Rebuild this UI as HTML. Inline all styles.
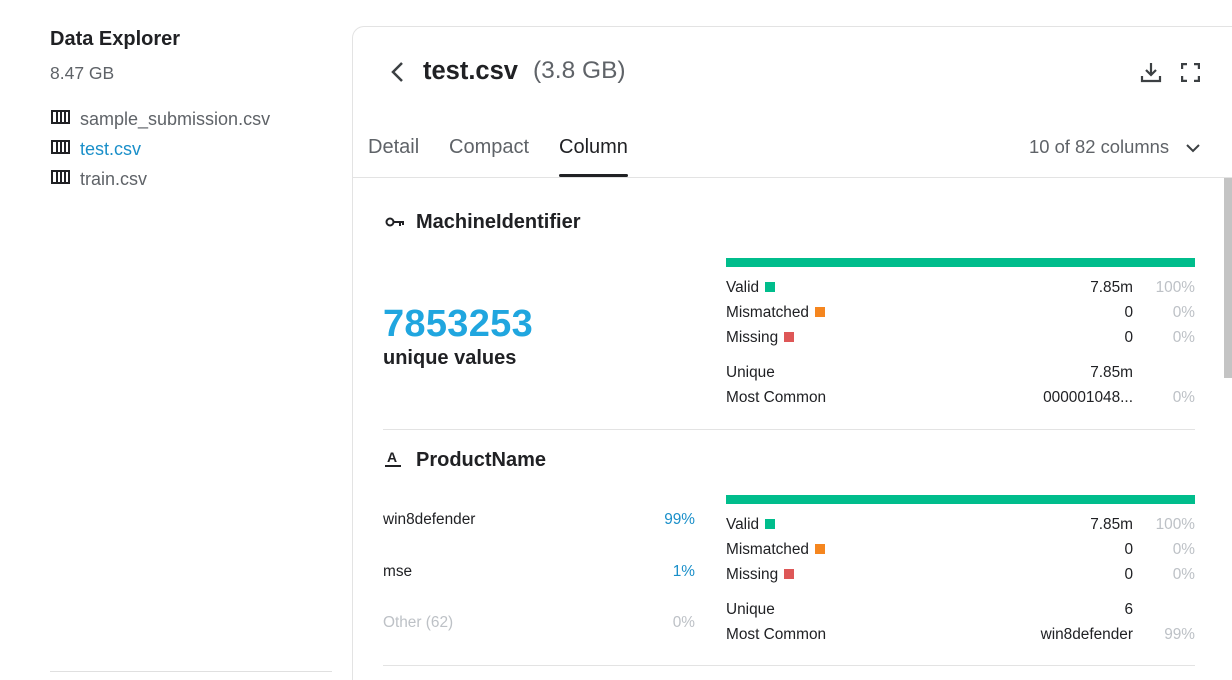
<!DOCTYPE html>
<html><head><meta charset="utf-8"><style>
*{margin:0;padding:0;box-sizing:border-box}
html,body{width:1232px;height:680px;overflow:hidden}
body{background:#fff;font-family:"Liberation Sans",sans-serif;color:#202124;position:relative}
.a{position:absolute;white-space:nowrap;line-height:1}
.g{color:#5f6368}
.lg{color:#bdc1c6}
.r{text-align:right}
.sq{display:inline-block;width:10px;height:10px;margin-left:6px;vertical-align:0}
.fi{position:absolute;width:19px;height:14px;border:2px solid #202124}
.fi i{position:absolute;top:0;bottom:0;width:2px;background:#202124}
.s{font-size:15.4px}
</style></head><body>
<div class="a" style="left:50px;top:29px;font-size:20px;font-weight:bold">Data Explorer</div>
<div class="a g" style="left:50px;top:65px;font-size:17.5px">8.47 GB</div>

<div class="fi" style="left:51px;top:110px"><i style="left:3px"></i><i style="left:7px"></i><i style="left:11px"></i></div>
<div class="a g" style="left:80px;top:110px;font-size:18px">sample_submission.csv</div>
<div class="fi" style="left:51px;top:140px"><i style="left:3px"></i><i style="left:7px"></i><i style="left:11px"></i></div>
<div class="a" style="left:80px;top:140px;font-size:18px;color:#1a8fc9">test.csv</div>
<div class="fi" style="left:51px;top:170px"><i style="left:3px"></i><i style="left:7px"></i><i style="left:11px"></i></div>
<div class="a g" style="left:80px;top:170px;font-size:18px">train.csv</div>
<div style="position:absolute;left:50px;top:671px;width:282px;height:1px;background:#e0e0e0"></div>

<div style="position:absolute;left:352px;top:26px;width:880px;height:654px;border:1px solid #e3e3e3;border-right:none;border-bottom:none;border-top-left-radius:12px"></div>
<svg style="position:absolute;left:388px;top:61px" width="20" height="22" viewBox="0 0 20 22"><path d="M14 2 L5 11 L14 20" fill="none" stroke="#3c4043" stroke-width="2.5"/></svg>
<div class="a" style="left:423px;top:59px;font-size:25.5px;font-weight:bold">test.csv</div>
<div class="a g" style="left:533px;top:59px;font-size:24.5px">(3.8 GB)</div>
<svg style="position:absolute;left:1140px;top:61px" width="22" height="22" viewBox="0 0 22 22"><path d="M11 2 V14 M6 9 L11 14 L16 9 M2 15 V20 H20 V15" fill="none" stroke="#3c4043" stroke-width="2.2"/></svg>
<svg style="position:absolute;left:1181px;top:63px" width="19" height="19" viewBox="0 0 19 19"><path d="M1 6 V1 H6 M13 1 H18 V6 M18 13 V18 H13 M6 18 H1 V13" fill="none" stroke="#3c4043" stroke-width="2.4"/></svg>

<div class="a g" style="left:368px;top:137px;font-size:20px">Detail</div>
<div class="a g" style="left:449px;top:137px;font-size:20px">Compact</div>
<div class="a" style="left:559px;top:137px;font-size:20px">Column</div>
<div style="position:absolute;left:559px;top:174px;width:69px;height:3px;background:#202124;border-radius:2px"></div>
<div class="a g" style="left:1029px;top:138px;font-size:18.4px">10 of 82 columns</div>
<svg style="position:absolute;left:1185px;top:142px" width="16" height="12" viewBox="0 0 16 12"><path d="M2 3 L8 9 L14 3" fill="none" stroke="#3c4043" stroke-width="2"/></svg>
<div style="position:absolute;left:353px;top:177px;width:879px;height:1px;background:#e3e3e3"></div>
<div style="position:absolute;left:1224px;top:178px;width:8px;height:200px;background:#c4c4c4"></div>

<!-- section 1 -->
<svg style="position:absolute;left:385px;top:216px" width="20" height="12" viewBox="0 0 20 12"><circle cx="5" cy="6" r="3.5" fill="none" stroke="#202124" stroke-width="2"/><path d="M8.5 6 H19 M15 6 V10 M18 6 V9" stroke="#202124" stroke-width="2" fill="none"/></svg>
<div class="a" style="left:416px;top:212px;font-size:20px;font-weight:bold">MachineIdentifier</div>
<div class="a" style="left:383px;top:305px;font-size:38px;font-weight:bold;color:#20a6df;letter-spacing:0.3px">7853253</div>
<div class="a" style="left:383px;top:348px;font-size:20px;font-weight:bold">unique values</div>
<div style="position:absolute;left:726px;top:258px;width:469px;height:9px;background:#00bd8c"></div>
<div class="a s" style="left:726px;top:280px">Valid<span class="sq" style="background:#00bd8c"></span></div>
<div class="a s" style="left:726px;top:305px">Mismatched<span class="sq" style="background:#f5861f"></span></div>
<div class="a s" style="left:726px;top:330px">Missing<span class="sq" style="background:#de5757"></span></div>
<div class="a s" style="left:726px;top:365px">Unique</div>
<div class="a s" style="left:726px;top:390px">Most Common</div>
<div class="a r s" style="right:99px;top:280px">7.85m</div>
<div class="a r s" style="right:99px;top:305px">0</div>
<div class="a r s" style="right:99px;top:330px">0</div>
<div class="a r s" style="right:99px;top:365px">7.85m</div>
<div class="a r s" style="right:99px;top:390px">000001048...</div>
<div class="a r lg s" style="right:37px;top:280px">100%</div>
<div class="a r lg s" style="right:37px;top:305px">0%</div>
<div class="a r lg s" style="right:37px;top:330px">0%</div>
<div class="a r lg s" style="right:37px;top:390px">0%</div>
<div style="position:absolute;left:383px;top:429px;width:812px;height:1px;background:#e3e3e3"></div>

<!-- section 2 -->
<div class="a" style="left:387px;top:450px;font-size:14px;font-weight:bold">A</div>
<div style="position:absolute;left:385px;top:465px;width:16px;height:2px;background:#202124"></div>
<div class="a" style="left:416px;top:450px;font-size:20px;font-weight:bold">ProductName</div>
<div class="a s" style="left:383px;top:512px">win8defender</div>
<div class="a r s" style="right:537px;top:512px;color:#1a8fc9">99%</div>
<div class="a s" style="left:383px;top:564px">mse</div>
<div class="a r s" style="right:537px;top:564px;color:#1a8fc9">1%</div>
<div class="a lg s" style="left:383px;top:615px">Other (62)</div>
<div class="a r lg s" style="right:537px;top:615px">0%</div>
<div style="position:absolute;left:726px;top:495px;width:469px;height:9px;background:#00bd8c"></div>
<div class="a s" style="left:726px;top:517px">Valid<span class="sq" style="background:#00bd8c"></span></div>
<div class="a s" style="left:726px;top:542px">Mismatched<span class="sq" style="background:#f5861f"></span></div>
<div class="a s" style="left:726px;top:567px">Missing<span class="sq" style="background:#de5757"></span></div>
<div class="a s" style="left:726px;top:602px">Unique</div>
<div class="a s" style="left:726px;top:627px">Most Common</div>
<div class="a r s" style="right:99px;top:517px">7.85m</div>
<div class="a r s" style="right:99px;top:542px">0</div>
<div class="a r s" style="right:99px;top:567px">0</div>
<div class="a r s" style="right:99px;top:602px">6</div>
<div class="a r s" style="right:99px;top:627px">win8defender</div>
<div class="a r lg s" style="right:37px;top:517px">100%</div>
<div class="a r lg s" style="right:37px;top:542px">0%</div>
<div class="a r lg s" style="right:37px;top:567px">0%</div>
<div class="a r lg s" style="right:37px;top:627px">99%</div>
<div style="position:absolute;left:383px;top:665px;width:812px;height:1px;background:#e3e3e3"></div>
</body></html>
